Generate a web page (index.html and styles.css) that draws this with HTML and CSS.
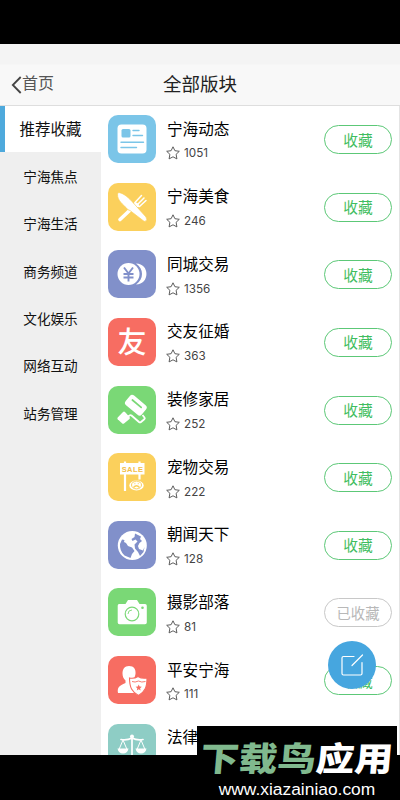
FILE: index.html
```
<!DOCTYPE html>
<html lang="zh-CN">
<head>
<meta charset="utf-8">
<title>全部版块</title>
<link rel="stylesheet" href="styles.css">
</head>
<body>
<svg width="0" height="0" class="defs"><symbol id="star" viewBox="0 0 14 14"><path d="M7 .8 8.900 4.700 13.300 5.300 10.100 8.300 10.900 12.900 7 10.800 3.100 12.900 3.900 8.300 .7 5.300 5.100 4.700Z" fill="none" stroke="#555" stroke-width=".95" stroke-linejoin="round"/></symbol></svg>
<div class="screen">
  <header class="nav">
    <a class="back"><svg width="11" height="18" viewBox="0 0 11 18"><path d="M9.700 1 1.800 9l7.900 8" fill="none" stroke="#444" stroke-width="1.800"/></svg><span>首页</span></a>
    <h1>全部版块</h1>
  </header>
  <main class="content">
    <nav class="side">
      <div class="cat active">推荐收藏</div>
      <div class="cat">宁海焦点</div>
      <div class="cat">宁海生活</div>
      <div class="cat">商务频道</div>
      <div class="cat">文化娱乐</div>
      <div class="cat">网络互动</div>
      <div class="cat">站务管理</div>
    </nav>
    <section class="list">
      <div class="row">
        <svg class="icon sky" viewBox="0 0 48 48"><rect x="9.500" y="9.500" width="29" height="29" rx="4" fill="#fff"/><rect x="13.500" y="14" width="9" height="8.500" rx="1.500" fill="#7bc5e8"/><path d="M25 15.500h6M25 20.500h9.500M13 27.200h22.500M13 32.500h15.500" stroke="#7bc5e8" stroke-width="1.400" stroke-linecap="round"/></svg>
        <div class="info"><div class="name">宁海动态</div><div class="meta"><svg class="star"><use href="#star"/></svg>1051</div></div>
        <button class="fav">收藏</button>
      </div>
      <div class="row">
        <svg class="icon yellow" viewBox="0 0 48 48"><path d="M12 36.500 28 21.500" stroke="#fff" stroke-width="3.600" stroke-linecap="round"/><path d="M27 19.500 33.500 12.500M29.500 21.500 36 15M31.500 23.500 38 17.500" stroke="#fff" stroke-width="1.500" stroke-linecap="round"/><path d="M26.500 19q-2 6 5 5l-1-3Z" fill="#fff"/><path d="M10 9.500C14 9.500 19 13 24 18.500L38 34q2 3-1 4.500-1 0-2-1L22 27.500q-2 0-4-3C13 20 8 15 10 9.500Z" fill="#fff" stroke="#fbd05c" stroke-width=".7"/></svg>
        <div class="info"><div class="name">宁海美食</div><div class="meta"><svg class="star"><use href="#star"/></svg>246</div></div>
        <button class="fav">收藏</button>
      </div>
      <div class="row">
        <svg class="icon indigo" viewBox="0 0 48 48"><circle cx="20.500" cy="24" r="11" fill="#fff"/><path d="M28 13.500c14 0 14 21 0 21 8-5 8-16 0-21Z" fill="#fff"/><path d="m16 17.500 4.500 6 4.500-6M20.500 23.500v8M15.500 24h10M15.500 27.500h10" fill="none" stroke="#8190ca" stroke-width="1.900"/></svg>
        <div class="info"><div class="name">同城交易</div><div class="meta"><svg class="star"><use href="#star"/></svg>1356</div></div>
        <button class="fav">收藏</button>
      </div>
      <div class="row">
        <svg class="icon red" viewBox="0 0 48 48"><text class="you" x="24" y="34.500" text-anchor="middle">友</text></svg>
        <div class="info"><div class="name">交友征婚</div><div class="meta"><svg class="star"><use href="#star"/></svg>363</div></div>
        <button class="fav">收藏</button>
      </div>
      <div class="row">
        <svg class="icon green" viewBox="0 0 48 48"><g transform="rotate(40 28 19)"><rect x="17.500" y="13" width="21" height="12.500" rx="3" fill="#fff"/><path d="M22 17.500h11.500" stroke="#7ad876" stroke-width="1.700" stroke-linecap="round"/></g><path d="M34.500 29 36.500 31.500q.7 1-.2 1.800L33 36q-1 .8-2 0l-7.500-6.500q-1-.8-2 0L18 32" fill="none" stroke="#fff" stroke-width="1.800" stroke-linejoin="round"/><path d="M9.700 31.500 15 26q1-1 2 0l4.500 5q.8 1 0 2L16 37.500q-1 .7-2-.2L9.700 33.300q-.7-.8 0-1.800Z" fill="#fff"/></svg>
        <div class="info"><div class="name">装修家居</div><div class="meta"><svg class="star"><use href="#star"/></svg>252</div></div>
        <button class="fav">收藏</button>
      </div>
      <div class="row">
        <svg class="icon yellow" viewBox="0 0 48 48"><path d="M17 8.500v29.500M31.500 8.500v18" stroke="#fff" stroke-width="2.200"/><rect x="12" y="10" width="24.500" height="11.500" fill="#fff"/><text class="sale" x="24.500" y="18.500" text-anchor="middle">SALE</text><ellipse cx="28.500" cy="32.500" rx="7.200" ry="5" fill="#fff"/><ellipse cx="28.500" cy="32" rx="5" ry="3.900" fill="none" stroke="#fbd05c" stroke-width="1"/><path d="M25.500 34.500q3-3.500 6 0M26.500 30.500h.8M29.800 30.500h.8" fill="none" stroke="#fbd05c" stroke-width="1.300"/></svg>
        <div class="info"><div class="name">宠物交易</div><div class="meta"><svg class="star"><use href="#star"/></svg>222</div></div>
        <button class="fav">收藏</button>
      </div>
      <div class="row">
        <svg class="icon indigo" viewBox="0 0 48 48"><circle cx="24.300" cy="24.500" r="14.500" fill="#fff"/><path d="M14 18.500 12 23q-.5 7 4.500 11.500l6 2.500 1.500-4 2.500-3-2.500-3.500-4-1.500-2-3-2-1 .5-2Z" fill="#8190ca"/><path d="M27 12.500 33 15.500 32 18l2 2-2.500 2-1.500 3 1 3 4 1.500 1.500-3.500-1 5-3.500 4-2-4-3-3.500-.5-4 3-3-2-2-3 1.500-1-2 3-2Z" fill="#8190ca"/></svg>
        <div class="info"><div class="name">朝闻天下</div><div class="meta"><svg class="star"><use href="#star"/></svg>128</div></div>
        <button class="fav">收藏</button>
      </div>
      <div class="row">
        <svg class="icon green" viewBox="0 0 48 48"><path d="M11 16h6.500l2.500-4h9l2.500 4H37q1.800 0 1.800 1.800V34.500q0 1.800-1.800 1.800H11.500q-1.800 0-1.800-1.800V17.800Q9.700 16 11 16Z" fill="#fff"/><circle cx="24" cy="26" r="6.800" fill="none" stroke="#7ad876" stroke-width="1.200"/><path d="M20 26q0-4 4-4" fill="none" stroke="#7ad876" stroke-width=".9"/><circle cx="34.500" cy="19.700" r="1.300" fill="#7ad876"/></svg>
        <div class="info"><div class="name">摄影部落</div><div class="meta"><svg class="star"><use href="#star"/></svg>81</div></div>
        <button class="fav done">已收藏</button>
      </div>
      <div class="row">
        <svg class="icon red" viewBox="0 0 48 48"><path d="M21 10c5 0 7 3.500 6.500 8-.5 3.500-2 5-3 6.500v3l6 4v5.500H10c-1-5 1-7.500 7.500-10v-2.500c-2-2-3-4-3-7 0-4.500 2-7.500 6.500-7.500Z" fill="#fff"/><path d="M21.500 22q4.500 1 8.500-1.500 4 2.500 9 1.500c0 9-2 14-8.500 17.500C24 36 21.500 31.500 21.500 22Z" fill="#fff" stroke="#f76d62" stroke-width="1.100"/><path d="M24 25.500q3 1.300 6.500-.5 3 1.800 7 .5" fill="none" stroke="#f76d62" stroke-width=".9"/><path d="m30.700 28.500.9 2 2.200.2-1.700 1.500.5 2.200-1.900-1.200-1.900 1.200.5-2.200-1.700-1.500 2.200-.2Z" fill="#f76d62"/></svg>
        <div class="info"><div class="name">平安宁海</div><div class="meta"><svg class="star"><use href="#star"/></svg>111</div></div>
        <button class="fav">收藏</button>
      </div>
      <div class="row">
        <svg class="icon teal" viewBox="0 0 48 48"><circle cx="24" cy="12.500" r="2" fill="#fff"/><path d="M13 15.500q6 1 11-1.500 5 2.500 11 1.500M24 13v22M16 36h16" fill="none" stroke="#fff" stroke-width="1.700" stroke-linecap="round"/><path d="M15 16 11 25.500M15 16l4 9.500M33 16l-4 9.500M33 16l4 9.500" fill="none" stroke="#fff"/><path d="M9.500 24.500h11q-1 5-5.500 5t-5.500-5ZM27.500 24.500h11q-1 5-5.500 5t-5.500-5Z" fill="#fff"/></svg>
        <div class="info"><div class="name">法律</div></div>
      </div>
    </section>
  </main>
  <div class="compose"><svg width="24" height="24" viewBox="0 0 24 24"><path d="M14 3.500H3.500Q2 3.500 2 5v15.500Q2 22 3.500 22h17q1.500 0 1.500-1.500V9.500M12 12.500 22.500 2" fill="none" stroke="#fff" stroke-width="1.200" stroke-linecap="round"/></svg></div>
  <div class="mark"><div class="brand"><span>下载鸟</span>应用</div><div class="url">www.xiazainiao.com</div></div>
</div>
</body>
</html>
```
FILE: styles.css
```
* { box-sizing: border-box; }
body { margin: 0; background: #000; font-family: "Liberation Sans", "Noto Sans CJK SC", sans-serif; color: #111; }
.defs { display: block; }
.screen { position: relative; width: 400px; height: 800px; padding-top: 44px; overflow: hidden; background: #000; display: flex; flex-direction: column; }
.nav { height: 62px; flex: none; padding-top: 20px; background: linear-gradient(#f4f4f4 20px, #f8f8f8 21px); border-bottom: 1px solid #dedede; display: grid; grid-template-columns: 100px 1fr 100px; align-items: center; }
.back { display: flex; align-items: center; padding-left: 11px; font-size: 16px; line-height: 20px; color: #555; white-space: nowrap; }
.back span { padding-bottom: 1px; }
.nav h1 { margin: 0; font-size: 18.5px; line-height: 24px; font-weight: 400; text-align: center; color: #222; }
.content { height: 649px; flex: none; display: flex; background: #fff; overflow: hidden; border-right: 1px solid #e4e4e4; }
.side { width: 101px; flex: none; background: #efefef; }
.cat { height: 47.3px; padding-bottom: 2px; display: flex; align-items: center; justify-content: center; font-size: 13.6px; }
.cat.active { height: 46px; margin-bottom: 1.5px; padding: 0 0 2px 14.5px; background: #fff; border-left: 5px solid #4ea9dc; font-size: 15.5px; justify-content: flex-start; }
.list { flex: 1; padding: 9px 7px 0; }
.row { height: 67.65px; display: flex; align-items: flex-start; }
.icon { width: 48px; height: 48px; flex: none; border-radius: 10px; }
.sky { background: #7bc5e8; }
.yellow { background: #fbd05c; }
.indigo { background: #8190ca; }
.red { background: #f76d62; }
.green { background: #7ad876; }
.teal { background: #8ecdc5; }
.you { font: 500 29px "Noto Sans CJK SC", sans-serif; fill: #fff; }
.sale { font: 700 7.5px "Liberation Sans", sans-serif; letter-spacing: .4px; fill: #f3bd45; }
.info { flex: 1; padding-left: 11px; }
.name { font-size: 15.6px; line-height: 22px; margin-top: 3.5px; color: #000; white-space: nowrap; }
.meta { display: flex; align-items: center; gap: 4px; height: 16px; margin: 4.8px 0 0 -1px; font: 11.7px/16px Inter, sans-serif; color: #444; }
.star { width: 14px; height: 14px; }
.fav { width: 68px; height: 29px; margin-top: 10px; padding: 0 0 1px; border: 1px solid #5cc877; border-radius: 15px; background: #fff; color: #3fbd60; font: 14.7px/25px "Noto Sans CJK SC", sans-serif; text-align: center; }
.fav.done { border-color: #c8c8c8; color: #b8b8b8; font-size: 14.3px; }
.compose { position: absolute; left: 328px; top: 641px; width: 48px; height: 48px; border-radius: 50%; background: #46a6df; display: flex; align-items: center; justify-content: center; }
.mark { position: absolute; left: 197px; top: 726px; width: 200px; height: 74px; background: #000; color: #fff; text-align: center; padding-top: 11px; }
.brand { font: 900 38.5px/38px "Noto Sans CJK SC", sans-serif; white-space: nowrap; transform: skewX(-5deg) scaleY(.87); }
.brand span { color: #80b98e; }
.url { font: 17.4px/20px "Liberation Sans", sans-serif; margin-top: 4px; }
```
